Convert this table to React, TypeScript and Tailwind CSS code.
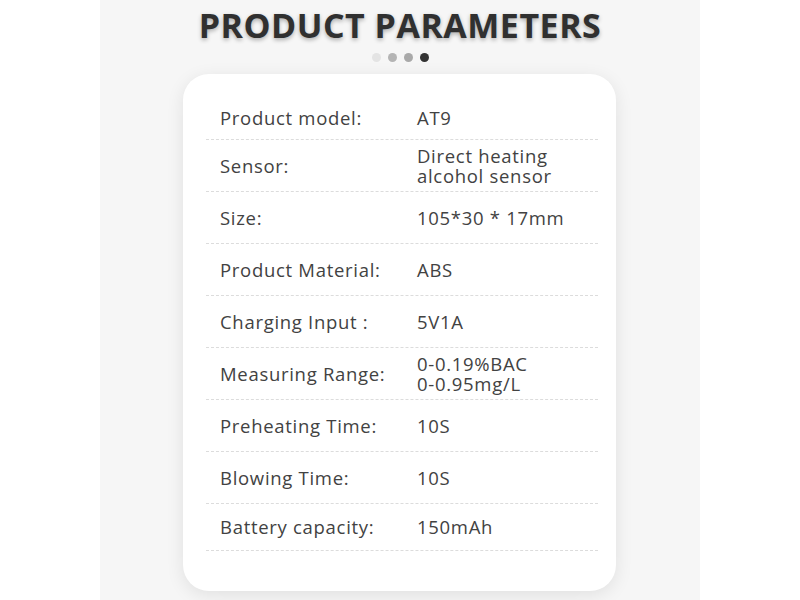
const params: { label: string; value: string[] }[] = [
  { label: "Product model:", value: ["AT9"] },
  { label: "Sensor:", value: ["Direct heating", "alcohol sensor"] },
  { label: "Size:", value: ["105*30 * 17mm"] },
  { label: "Product Material:", value: ["ABS"] },
  { label: "Charging Input :", value: ["5V1A"] },
  { label: "Measuring Range:", value: ["0-0.19%BAC", "0-0.95mg/L"] },
  { label: "Preheating Time:", value: ["10S"] },
  { label: "Blowing Time:", value: ["10S"] },
  { label: "Battery capacity:", value: ["150mAh"] },
];

export default function App() {
  return (
    <div className="flex h-[600px] w-full justify-center bg-white font-['Open_Sans',sans-serif]">
      <div className="flex w-[600px] flex-col items-center bg-[#f6f6f6]">
        {/* Heading */}
        <h1 className="mt-[2px] text-[34px] font-bold leading-[46px] tracking-[0.5px] text-[#303030] [text-shadow:0_2px_4px_rgba(0,0,0,0.3)]">
          PRODUCT PARAMETERS
        </h1>
        <div className="mt-[5px] flex gap-[7px]">
          <span className="h-[9px] w-[9px] rounded-full bg-[#e4e4e4]" />
          <span className="h-[9px] w-[9px] rounded-full bg-[#b4b4b4]" />
          <span className="h-[9px] w-[9px] rounded-full bg-[#a9a9a9]" />
          <span className="h-[9px] w-[9px] rounded-full bg-[#333333]" />
        </div>

        {/* Card */}
        <div className="mt-[12px] ml-[-1px] w-[433px] rounded-[26px] bg-white pt-[14px] pb-[40px] pl-[23px] pr-[18px] shadow-[0_4px_18px_rgba(0,0,0,0.09)]">
          {params.map((p, i) => (
            <div
              key={p.label}
              className={`flex items-center border-b border-dashed border-[#dcdcdc] pl-[14px] text-[18.5px] text-[#424242] ${
                i === params.length - 1 ? "h-[47px]" : "h-[52px]"
              } ${i === 0 ? "pt-[9px]" : ""}`}
            >
              <span className="w-[197px] shrink-0 tracking-[0.7px]">{p.label}</span>
              <span className="flex flex-col leading-[20px] tracking-[0.7px]">
                {p.value.map((v) => (
                  <span key={v}>{v}</span>
                ))}
              </span>
            </div>
          ))}
        </div>
      </div>
    </div>
  );
}
